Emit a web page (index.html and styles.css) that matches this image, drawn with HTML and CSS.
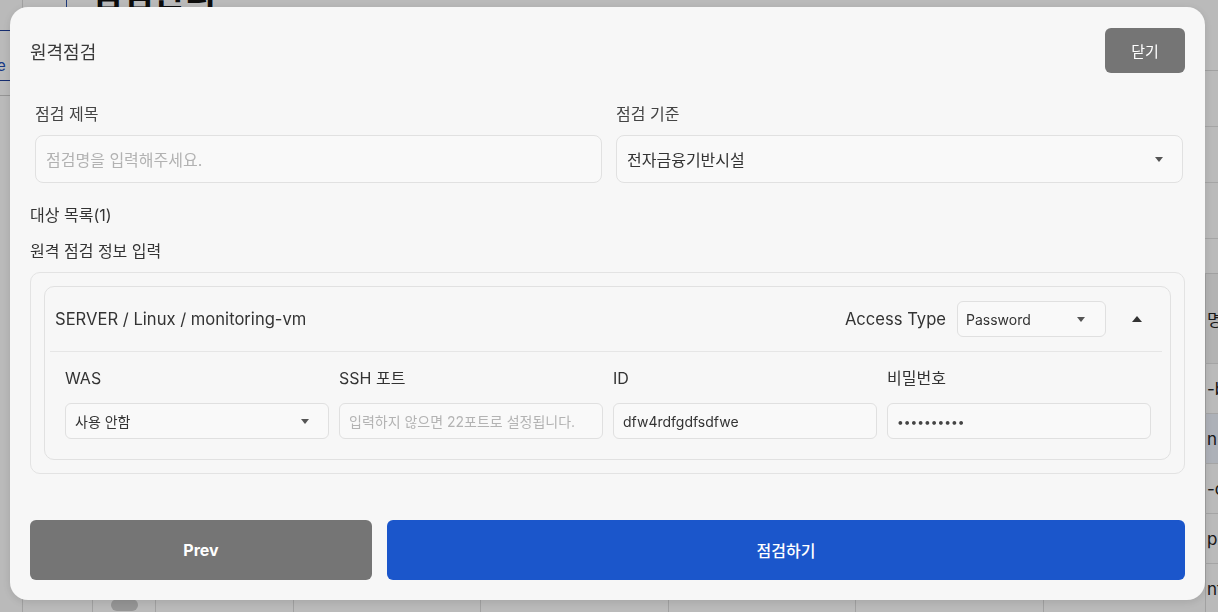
FILE: index.html
```html
<!DOCTYPE html>
<html lang="ko">
<head>
<meta charset="utf-8">
<title>원격점검</title>
<link rel="stylesheet" href="styles.css">
</head>
<body>
<div class="page">
  <aside class="nav">
    <div class="nav-top"></div>
    <div class="nav-item active"><span class="nav-link">e</span></div>
    <div class="nav-item"></div>
  </aside>
  <main class="main">
    <div class="top-lines"><span></span><span></span></div>
    <h1 class="page-title">점검관리</h1>
    <div class="filters">
      <div class="filter-row"></div>
      <div class="filter-row"></div>
      <div class="filter-row"></div>
    </div>
    <div class="table">
      <div class="trow thead"><div class="c c1"></div><div class="c c2"></div><div class="c c3"></div><div class="c c4"></div><div class="c c5"></div><div class="c c6"></div><div class="c c7"></div><div class="c c8"></div><div class="c c9">명</div></div>
      <div class="trow"><div class="c c1"></div><div class="c c2"></div><div class="c c3"></div><div class="c c4"></div><div class="c c5"></div><div class="c c6"></div><div class="c c7"></div><div class="c c8"></div><div class="c c9">-b</div></div>
      <div class="trow hl"><div class="c c1"></div><div class="c c2"></div><div class="c c3"></div><div class="c c4"></div><div class="c c5"></div><div class="c c6"></div><div class="c c7"></div><div class="c c8"></div><div class="c c9">n</div></div>
      <div class="trow"><div class="c c1"></div><div class="c c2"></div><div class="c c3"></div><div class="c c4"></div><div class="c c5"></div><div class="c c6"></div><div class="c c7"></div><div class="c c8"></div><div class="c c9">-c</div></div>
      <div class="trow"><div class="c c1"></div><div class="c c2"></div><div class="c c3"></div><div class="c c4"></div><div class="c c5"></div><div class="c c6"></div><div class="c c7"></div><div class="c c8"></div><div class="c c9">p</div></div>
      <div class="trow"><div class="c c1"></div><div class="c c2"><span class="toggle"></span></div><div class="c c3"></div><div class="c c4"></div><div class="c c5"></div><div class="c c6"></div><div class="c c7"></div><div class="c c8"></div><div class="c c9">nt</div></div>
    </div>
  </main>
</div>
<div class="backdrop"></div>

<div class="modal">
  <div class="modal-head">
    <div class="modal-title">원격점검</div>
    <button class="btn-close">닫기</button>
  </div>

  <div class="form-row">
    <div class="field">
      <div class="field-label">점검 제목</div>
      <div class="text-input placeholder">점검명을 입력해주세요.</div>
    </div>
    <div class="field">
      <div class="field-label">점검 기준</div>
      <div class="text-input select"><span>전자금융기반시설</span><i class="tri-down"></i></div>
    </div>
  </div>

  <div class="section-label first">대상 목록(1)</div>
  <div class="section-label">원격 점검 정보 입력</div>

  <div class="outer-box">
    <div class="card">
      <div class="card-head">
        <div class="card-title">SERVER / Linux / monitoring-vm</div>
        <div class="access-label">Access Type</div>
        <div class="small-input select access-select"><span>Password</span><i class="tri-down"></i></div>
        <div class="collapse"><i class="tri-up"></i></div>
      </div>
      <div class="card-body">
        <div class="cell">
          <div class="cell-label">WAS</div>
          <div class="small-input select"><span>사용 안함</span><i class="tri-down"></i></div>
        </div>
        <div class="cell">
          <div class="cell-label">SSH 포트</div>
          <div class="small-input placeholder small-ph">입력하지 않으면 22포트로 설정됩니다.</div>
        </div>
        <div class="cell">
          <div class="cell-label">ID</div>
          <div class="small-input">dfw4rdfgdfsdfwe</div>
        </div>
        <div class="cell">
          <div class="cell-label">비밀번호</div>
          <div class="small-input dots">••••••••••</div>
        </div>
      </div>
    </div>
  </div>

  <div class="actions">
    <button class="btn btn-prev">Prev</button>
    <button class="btn btn-primary">점검하기</button>
  </div>
</div>
</body>
</html>
```
FILE: styles.css
```css
html, body {
  margin: 0;
  padding: 0;
  width: 1218px;
  height: 612px;
  overflow: hidden;
  background: #fff;
  font-family: Inter, "Noto Sans CJK KR", sans-serif;
}

/* ---------- background page ---------- */
.page {
  display: flex;
  width: 1218px;
  height: 612px;
  overflow: hidden;
}
.nav {
  width: 22px;
  flex: none;
  border-right: 1px solid #ddd;
}
.nav-top {
  height: 30px;
}
.nav-item {
  height: 49px;
  border-top: 1px solid #1f3f9a;
  border-bottom: 1px solid #1f3f9a;
  display: flex;
  align-items: center;
  font-size: 15px;
  color: #1f4fb8;
}
.nav-item + .nav-item {
  border-top: 0;
  border-bottom: 1px solid #ccc;
  height: 14px;
}
.nav-link {
  margin-left: -3px;
  margin-top: 20px;
}
.main {
  flex: none;
  width: 1195px;
  padding-left: 55px;
  box-sizing: border-box;
  overflow: hidden;
}
.top-lines {
  display: flex;
  height: 0;
}
.top-lines span {
  display: block;
  height: 8px;
  border-left: 1px solid #2a4fa8;
  margin-left: -12px;
  width: 43px;
}
.page-title {
  margin: -24px 0 0 13px;
  font-size: 34px;
  line-height: 34px;
  font-weight: 700;
  color: #111;
  font-family: "Noto Sans CJK KR", sans-serif;
}
.filters {
  margin-top: 60px;
  border-top: 1px solid #ddd;
}
.filter-row {
  height: 55px;
  border-bottom: 1px solid #e3e3e3;
}
.table {
  margin-top: 34px;
  border-top: 1px solid #ddd;
  width: 1400px;
}
.trow {
  display: flex;
  height: 49px;
  border-bottom: 1px solid #e2e2e2;
}
.trow.thead {
  height: 89px;
  background: #f6f6f6;
}
.trow.hl {
  background: #eef3fd;
}
.c {
  border-right: 1px solid #ddd;
  display: flex;
  align-items: center;
  font-size: 17px;
  color: #222;
  box-sizing: border-box;
  flex: none;
}
.c1 { width: 15px; }
.c2 { width: 63px; justify-content: center; align-items: flex-end; }
.c3 { width: 138px; }
.c4 { width: 187px; }
.c5 { width: 188px; }
.c6 { width: 187px; }
.c7 { width: 188px; }
.c8 { width: 162px; }
.c9 { width: 200px; padding-left: 1px; }
.toggle {
  display: block;
  width: 27px;
  height: 12px;
  border-radius: 6px;
  background: #ccc;
  margin-bottom: 2px;
}
.backdrop {
  position: fixed;
  inset: 0;
  background: rgba(0, 0, 0, 0.27);
}

/* ---------- modal ---------- */
.modal {
  position: fixed;
  left: 10px;
  top: 7px;
  width: 1195px;
  height: 593px;
  box-sizing: border-box;
  background: #f7f7f7;
  border-radius: 18px;
  padding: 21px 20px 20px;
  box-shadow: 0 2px 10px rgba(0, 0, 0, 0.12);
  display: flex;
  flex-direction: column;
  color: #333;
}
.modal-head {
  display: flex;
  align-items: center;
  justify-content: space-between;
  height: 45px;
}
.modal-title {
  font-size: 18px;
  color: #3a3a3a;
}
.btn-close {
  width: 80px;
  height: 45px;
  border: 0;
  border-radius: 6px;
  background: #757575;
  color: #fff;
  font-size: 15px;
  font-family: Inter, "Noto Sans CJK KR", sans-serif;
  padding: 0;
}
.form-row {
  display: grid;
  grid-template-columns: 1fr 1fr;
  column-gap: 14px;
  margin: 31px 2px 0 5px;
}
.field-label {
  font-size: 16px;
  line-height: 21px;
  color: #444;
  margin-bottom: 10px;
}
.text-input {
  height: 48px;
  box-sizing: border-box;
  border: 1px solid #e1e1e1;
  border-radius: 8px;
  background: #f9f9f9;
  padding: 0 10px;
  font-size: 16px;
  display: flex;
  align-items: center;
  color: #333;
}
.placeholder {
  color: #b2b2b2;
}
.text-input.select {
  justify-content: space-between;
  padding-right: 19px;
}
.tri-down {
  display: block;
  width: 0;
  height: 0;
  border-left: 4px solid transparent;
  border-right: 4px solid transparent;
  border-top: 5px solid #555;
}
.tri-up {
  display: block;
  width: 0;
  height: 0;
  border-left: 5px solid transparent;
  border-right: 5px solid transparent;
  border-bottom: 6px solid #333;
}
.section-label {
  font-size: 16px;
  line-height: 20px;
  color: #333;
  margin-top: 16px;
}
.section-label.first {
  margin-top: 22px;
}
.outer-box {
  margin-top: 11px;
  border: 1px solid #e3e3e3;
  border-radius: 10px;
  padding: 13px;
}
.card {
  border: 1px solid #e1e1e1;
  border-radius: 10px;
  padding: 0 8px 0 5px;
}
.card-head {
  display: flex;
  align-items: center;
  padding: 14px 0 14px 5px;
  border-bottom: 1px solid #e6e6e6;
}
.card-title {
  flex: 1;
  font-size: 16.6px;
  color: #333;
}
.access-label {
  font-size: 16.6px;
  color: #333;
  margin-right: 11px;
}
.small-input {
  height: 36px;
  box-sizing: border-box;
  border: 1px solid #e0e0e0;
  border-radius: 6px;
  background: #f9f9f9;
  padding: 0 9px;
  font-size: 14px;
  display: flex;
  align-items: center;
  color: #333;
  white-space: nowrap;
  overflow: hidden;
}
.small-input.select {
  justify-content: space-between;
  padding-right: 19px;
}
.small-input.access-select {
  width: 149px;
  padding-left: 8px;
  padding-right: 20px;
}
.collapse {
  width: 24px;
  display: flex;
  justify-content: center;
  margin: 0 13px 0 19px;
}
.card-body {
  display: grid;
  grid-template-columns: repeat(4, 1fr);
  column-gap: 10px;
  padding: 16px 11px 20px 15px;
}
.cell-label {
  font-size: 16px;
  line-height: 20px;
  color: #333;
  margin-bottom: 15px;
}
.small-ph {
  font-size: 14px;
  color: #b3b3b3;
}
.small-input.dots {
  font-size: 12px;
  letter-spacing: 0;
  color: #444;
}
.actions {
  margin-top: auto;
  display: grid;
  grid-template-columns: 342px 1fr;
  column-gap: 15px;
}
.btn {
  height: 60px;
  border: 0;
  border-radius: 6px;
  color: #fff;
  font-size: 16px;
  padding: 0;
  font-family: Inter, "Noto Sans CJK KR", sans-serif;
}
.btn-prev {
  background: #757575;
  font-weight: 700;
}
.btn-primary {
  background: #1b56cb;
  font-weight: 500;
  font-size: 16px;
}
```
